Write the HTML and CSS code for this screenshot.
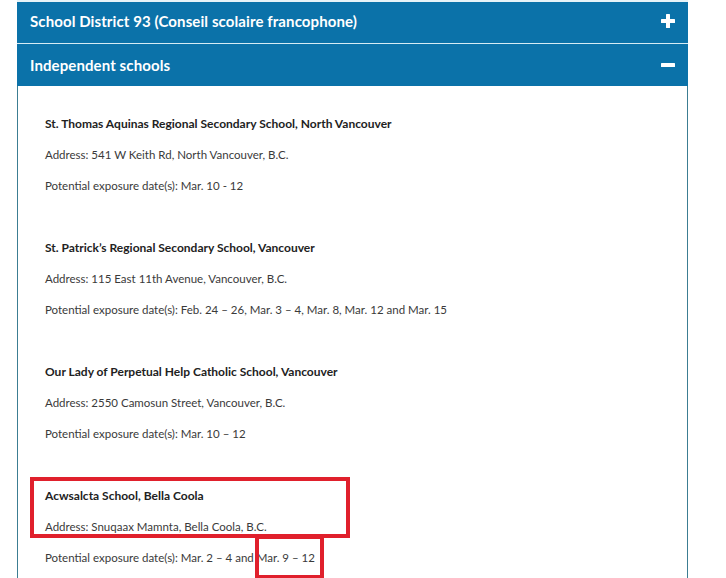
FILE: index.html
```html
<!DOCTYPE html>
<html>
<head>
<meta charset="utf-8">
<link rel="stylesheet" href="styles.css">
</head>
<body>
<div class="accordion">
  <div class="acc-header first">
    <span class="acc-title">School District 93 (Conseil scolaire francophone)</span>
    <svg class="acc-icon" width="14" height="14" viewBox="0 0 14 14"><rect x="5" y="0" width="4" height="14" rx="0.5" fill="#fff"/><rect x="0" y="5" width="14" height="4" rx="0.5" fill="#fff"/></svg>
  </div>
  <div class="acc-header">
    <span class="acc-title">Independent schools</span>
    <svg class="acc-icon" width="14" height="14" viewBox="0 0 14 14"><rect x="0" y="5" width="14" height="4" rx="0.5" fill="#fff"/></svg>
  </div>
  <div class="acc-body">
    <div class="school">
      <p class="name">St. Thomas Aquinas Regional Secondary School, North Vancouver</p>
      <p>Address: 541 W Keith Rd, North Vancouver, B.C.</p>
      <p>Potential exposure date(s): Mar. 10 - 12</p>
    </div>
    <div class="school">
      <p class="name">St. Patrick’s Regional Secondary School, Vancouver</p>
      <p>Address: 115 East 11th Avenue, Vancouver, B.C.</p>
      <p>Potential exposure date(s): Feb. 24 – 26, Mar. 3 – 4, Mar. 8, Mar. 12 and Mar. 15</p>
    </div>
    <div class="school">
      <p class="name">Our Lady of Perpetual Help Catholic School, Vancouver</p>
      <p>Address: 2550 Camosun Street, Vancouver, B.C.</p>
      <p>Potential exposure date(s): Mar. 10 – 12</p>
    </div>
    <div class="school marked">
      <p class="name">Acwsalcta School, Bella Coola</p>
      <p>Address: Snuqaax Mamnta, Bella Coola, B.C.</p>
      <p>Potential exposure date(s): Mar. 2 – 4 and Mar. 9 – 12</p>
      <div class="mark mark-a"></div>
      <div class="mark mark-b"></div>
    </div>
  </div>
</div>
</body>
</html>
```
FILE: styles.css
```css
html, body {
  margin: 0;
  padding: 0;
  background: #fff;
}
body {
  font-family: Lato, "Open Sans", Arial, sans-serif;
}
.accordion {
  margin-left: 17px;
  width: 671px;
}
.acc-header {
  background: #0b72a9;
  height: 43px;
  border-top: 1px solid #d6ecf4;
  display: flex;
  align-items: center;
  justify-content: space-between;
  padding: 0 13px 1px 13px;
  box-sizing: border-box;
}
.acc-header.first {
  border-top: 2px solid #e6f3f8;
  height: 43px;
  padding-bottom: 3px;
}
.acc-title {
  color: #fff;
  font-weight: 700;
  font-size: 15px;
  letter-spacing: 0.1px;
}
.acc-icon {
  display: block;
}
.acc-body {
  border-left: 1px solid #3c7d92;
  border-right: 1px solid #3c7d92;
  padding: 22px 27px 0 27px;
  min-height: 500px;
}
.school {
  margin-bottom: 31px;
}
.school p {
  margin: 0;
  font-size: 11.5px;
  line-height: 31px;
  color: #3a3a3a;
}
.school p.name {
  font-size: 12px;
  font-weight: 700;
  color: #222;
}
.marked {
  position: relative;
}
.mark {
  position: absolute;
  border: 4px solid #e0202c;
  box-sizing: border-box;
}
.mark-a {
  left: -15px;
  top: -3px;
  width: 320px;
  height: 61px;
}
.mark-b {
  left: 210px;
  top: 55px;
  width: 69px;
  height: 44px;
}
```
